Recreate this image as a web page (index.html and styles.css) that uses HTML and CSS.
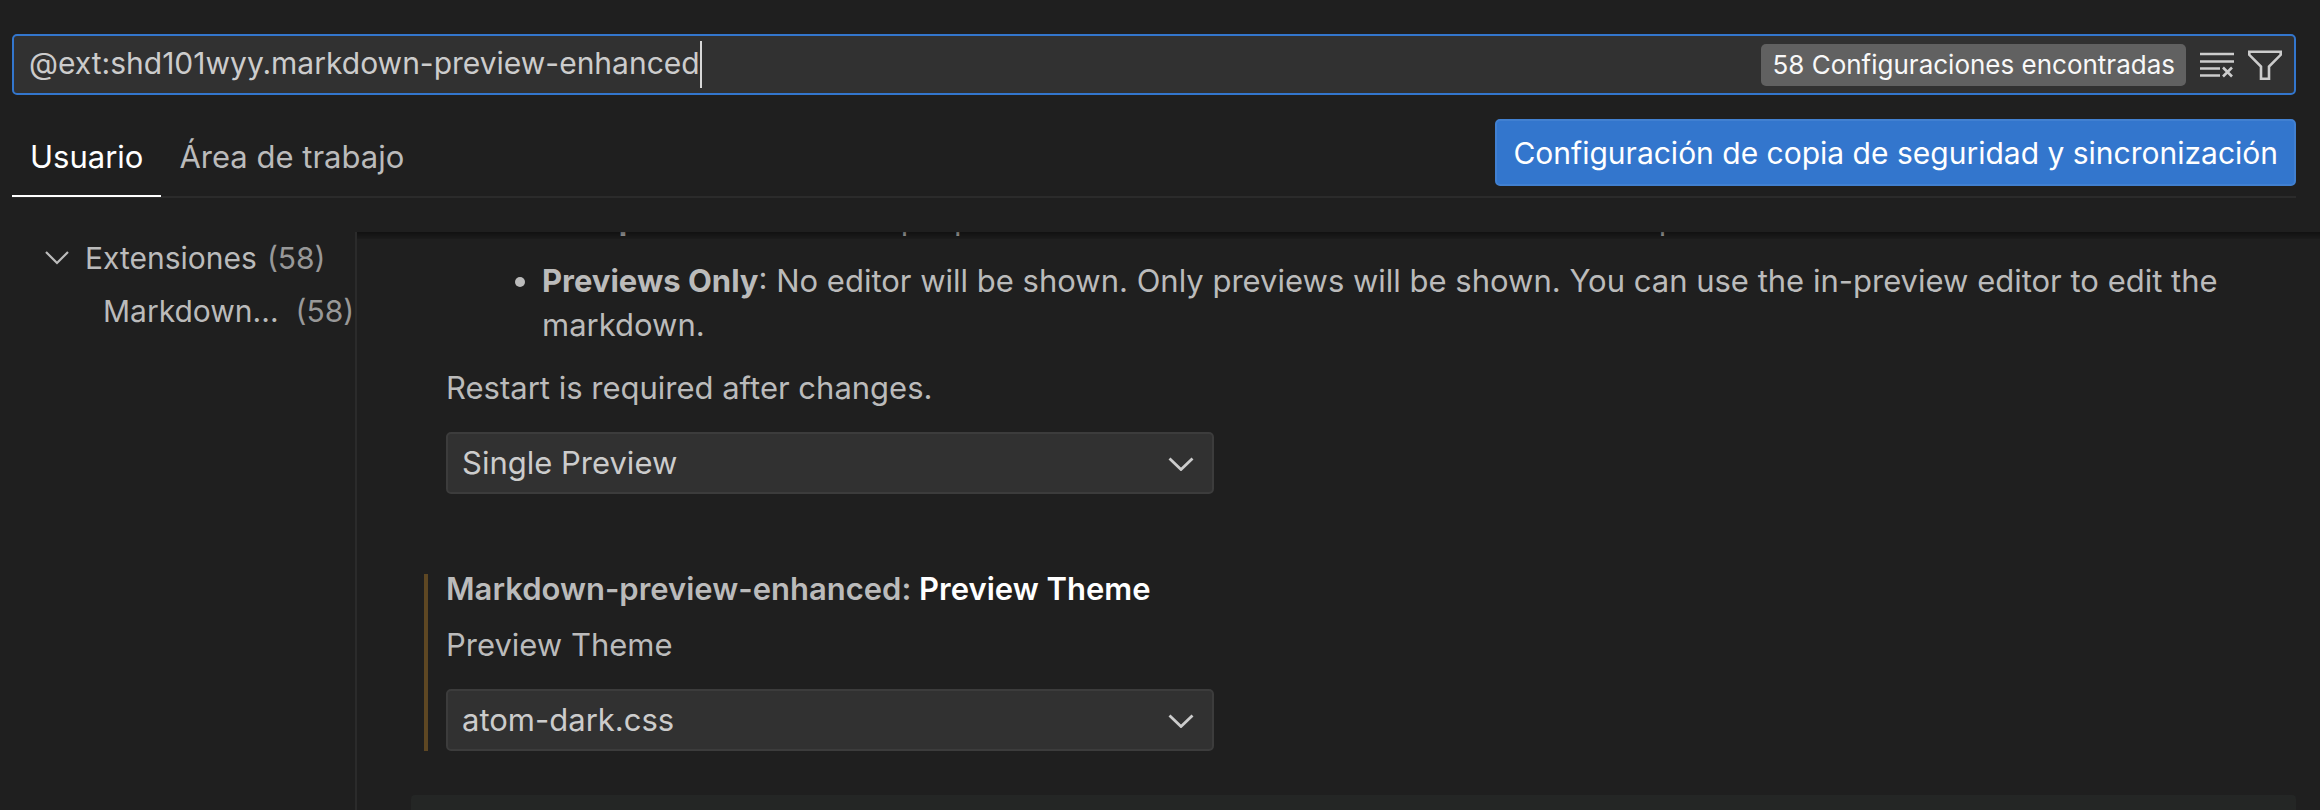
FILE: index.html
```html
<!DOCTYPE html>
<html lang="es">
<head>
<meta charset="utf-8">
<title>Configuración</title>
<link rel="stylesheet" href="styles.css">
</head>
<body>
<div class="settings">
  <header class="header">
    <div class="search">
      <input class="search-input" type="text" aria-label="Buscar configuración" value="@ext:shd101wyy.markdown-preview-enhanced" spellcheck="false">
      <span class="caret"></span>
      <span class="badge">58 Configuraciones encontradas</span>
      <button class="icon-button" type="button" aria-label="Borrar búsqueda">
        <svg class="icon" viewBox="0 0 38 38" fill="none" stroke="currentColor" stroke-width="2.6"><path d="M2 8h34M2 15.500h34M2 22.500h20M2 29.500h20M25 21.500l9 9M34 21.500l-9 9"/></svg>
      </button>
      <button class="icon-button" type="button" aria-label="Filtrar configuración">
        <svg class="icon" viewBox="0 0 38 38" fill="none" stroke="currentColor" stroke-width="2.6"><path d="M3.300 5.800h31.400v3L23 20.500v12.200h-8V20.500L3.300 8.800z"/></svg>
      </button>
    </div>
    <nav class="tabs">
      <button class="tab tab-active" type="button">Usuario</button>
      <button class="tab" type="button">Área de trabajo</button>
      <button class="sync" type="button">Configuración de copia de seguridad y sincronización</button>
    </nav>
  </header>
  <div class="body">
    <aside class="toc">
      <div class="toc-row">
        <svg class="toc-chevron" viewBox="0 0 24 14" fill="none" stroke="currentColor" stroke-width="2.200"><path d="M1 1l11 11L23 1"/></svg>
        <span class="toc-label">Extensiones</span>
        <span class="toc-count">(58)</span>
      </div>
      <div class="toc-row toc-child">
        <span class="toc-label">Markdown...</span>
        <span class="toc-count">(58)</span>
      </div>
    </aside>
    <main class="pane">
      <section class="item item-scrolled">
        <ul class="modes">
          <li><strong>Multiple Previews</strong>: Multiple previews will be shown. Each editor has its own preview.</li>
          <li><strong>Previews Only</strong>: No editor will be shown. Only previews will be shown. You can use the in-preview editor to edit the markdown.</li>
        </ul>
        <p class="text">Restart is required after changes.</p>
        <div class="select-box">
          <select class="select" aria-label="Preview Mode"><option>Single Preview</option></select>
          <svg class="select-chevron" viewBox="0 0 26 14" fill="none" stroke="currentColor" stroke-width="2.800"><path d="M1.500 1.500L13 12.500 24.500 1.500"/></svg>
        </div>
      </section>
      <section class="item item-modified">
        <h2 class="title"><span class="title-category">Markdown-preview-enhanced:</span> Preview Theme</h2>
        <label class="text" for="theme">Preview Theme</label>
        <div class="select-box">
          <select class="select" id="theme"><option>atom-dark.css</option></select>
          <svg class="select-chevron" viewBox="0 0 26 14" fill="none" stroke="currentColor" stroke-width="2.800"><path d="M1.500 1.500L13 12.500 24.500 1.500"/></svg>
        </div>
      </section>
      <section class="item-next"></section>
    </main>
  </div>
</div>
</body>
</html>
```
FILE: styles.css
```css
* { box-sizing: border-box; }

body {
  margin: 0;
  background: #1f1f1f;
  color: #bbbbbb;
  font: 31px/44px Inter, "Liberation Sans", sans-serif;
}

button, input, select { font: inherit; color: inherit; margin: 0; }

.settings {
  display: flex;
  flex-direction: column;
  height: 100vh;
  overflow: hidden;
}

.header { padding: 34px 24px 34px 12px; }

.search {
  display: flex;
  align-items: center;
  padding: 5px 10px 5px 15px;
  border: 2px solid #3376cd;
  border-radius: 5px;
  background: #313131;
  color: #cccccc;
  font-size: 30px;
}

.search-input {
  field-sizing: content;
  height: 47px;
  padding: 0 0 3px;
  border: 0;
  outline: 0;
  background: transparent;
}

.caret { width: 2px; height: 47px; background: #d8d8d8; }

.badge {
  margin-left: auto;
  margin-right: 12px;
  padding: 0 11px;
  border-radius: 5px;
  background: #616161;
  color: #f8f8f8;
  font-size: 26px;
  line-height: 42px;
}

.icon-button {
  display: flex;
  padding: 0;
  border: 0;
  background: transparent;
}

.icon-button + .icon-button { margin-left: 10px; }

.icon { width: 38px; height: 38px; }

.tabs {
  display: flex;
  align-items: flex-start;
  margin-top: 24px;
  border-bottom: 2px solid #2b2b2b;
}

.tab {
  height: 78px;
  margin-bottom: -1px;
  padding: 0 18px;
  border: 0;
  border-bottom: 2px solid transparent;
  background: transparent;
}

.tab-active { border-color: #ffffff; color: #ffffff; }

.sync {
  height: 67px;
  margin-left: auto;
  padding: 0 16px;
  border: 2px solid #4180d1;
  border-radius: 5px;
  background: #3376cd;
  color: #ffffff;
  font-size: 30px;
}

.body {
  display: grid;
  grid-template-columns: 357px minmax(0, 1fr);
  flex: 1;
  min-height: 0;
}

.toc { border-right: 2px solid #2b2b2b; font-size: 30px; }

.toc-row {
  display: flex;
  align-items: center;
  gap: 10px;
  height: 53px;
  padding: 0 0 2px 45px;
}

.toc-child { gap: 17px; padding-left: 103px; }

.toc-chevron { width: 24px; height: 14px; margin-right: 6px; }

.toc-count { color: #989898; }

.pane {
  position: relative;
  overflow: hidden;
  padding: 0 24px 0 54px;
}

.pane::before {
  content: "";
  position: absolute;
  inset: 0 0 auto 0;
  height: 7px;
  background: linear-gradient(rgba(0, 0, 0, 0.45), rgba(0, 0, 0, 0.12));
}

.item {
  display: flex;
  flex-direction: column;
  margin-left: 13px;
  padding-left: 18px;
  border-left: 4px solid transparent;
}

.item-scrolled { margin-top: -35px; margin-bottom: 80px; }

.item-modified { margin-bottom: 44px; border-color: #5e4723; }

.modes {
  display: flex;
  flex-direction: column;
  gap: 18px;
  margin: 0;
  padding-left: 96px;
}

.text { margin: 19px 0 22px; }

.title {
  margin: 0;
  color: #ffffff;
  font-size: 31px;
  font-weight: 600;
  line-height: 30px;
}

.title-category { color: #bbbbbb; }

.select-box { position: relative; width: 768px; color: #cccccc; }

.select {
  display: block;
  width: 100%;
  height: 62px;
  padding: 0 14px;
  border: 2px solid #3c3c3c;
  border-radius: 5px;
  background: #313131;
  appearance: none;
}

.select-chevron {
  position: absolute;
  top: 25px;
  right: 20px;
  width: 26px;
  height: 14px;
  pointer-events: none;
}

.item-next {
  height: 100px;
  border-radius: 4px;
  background: #242625;
}
```
